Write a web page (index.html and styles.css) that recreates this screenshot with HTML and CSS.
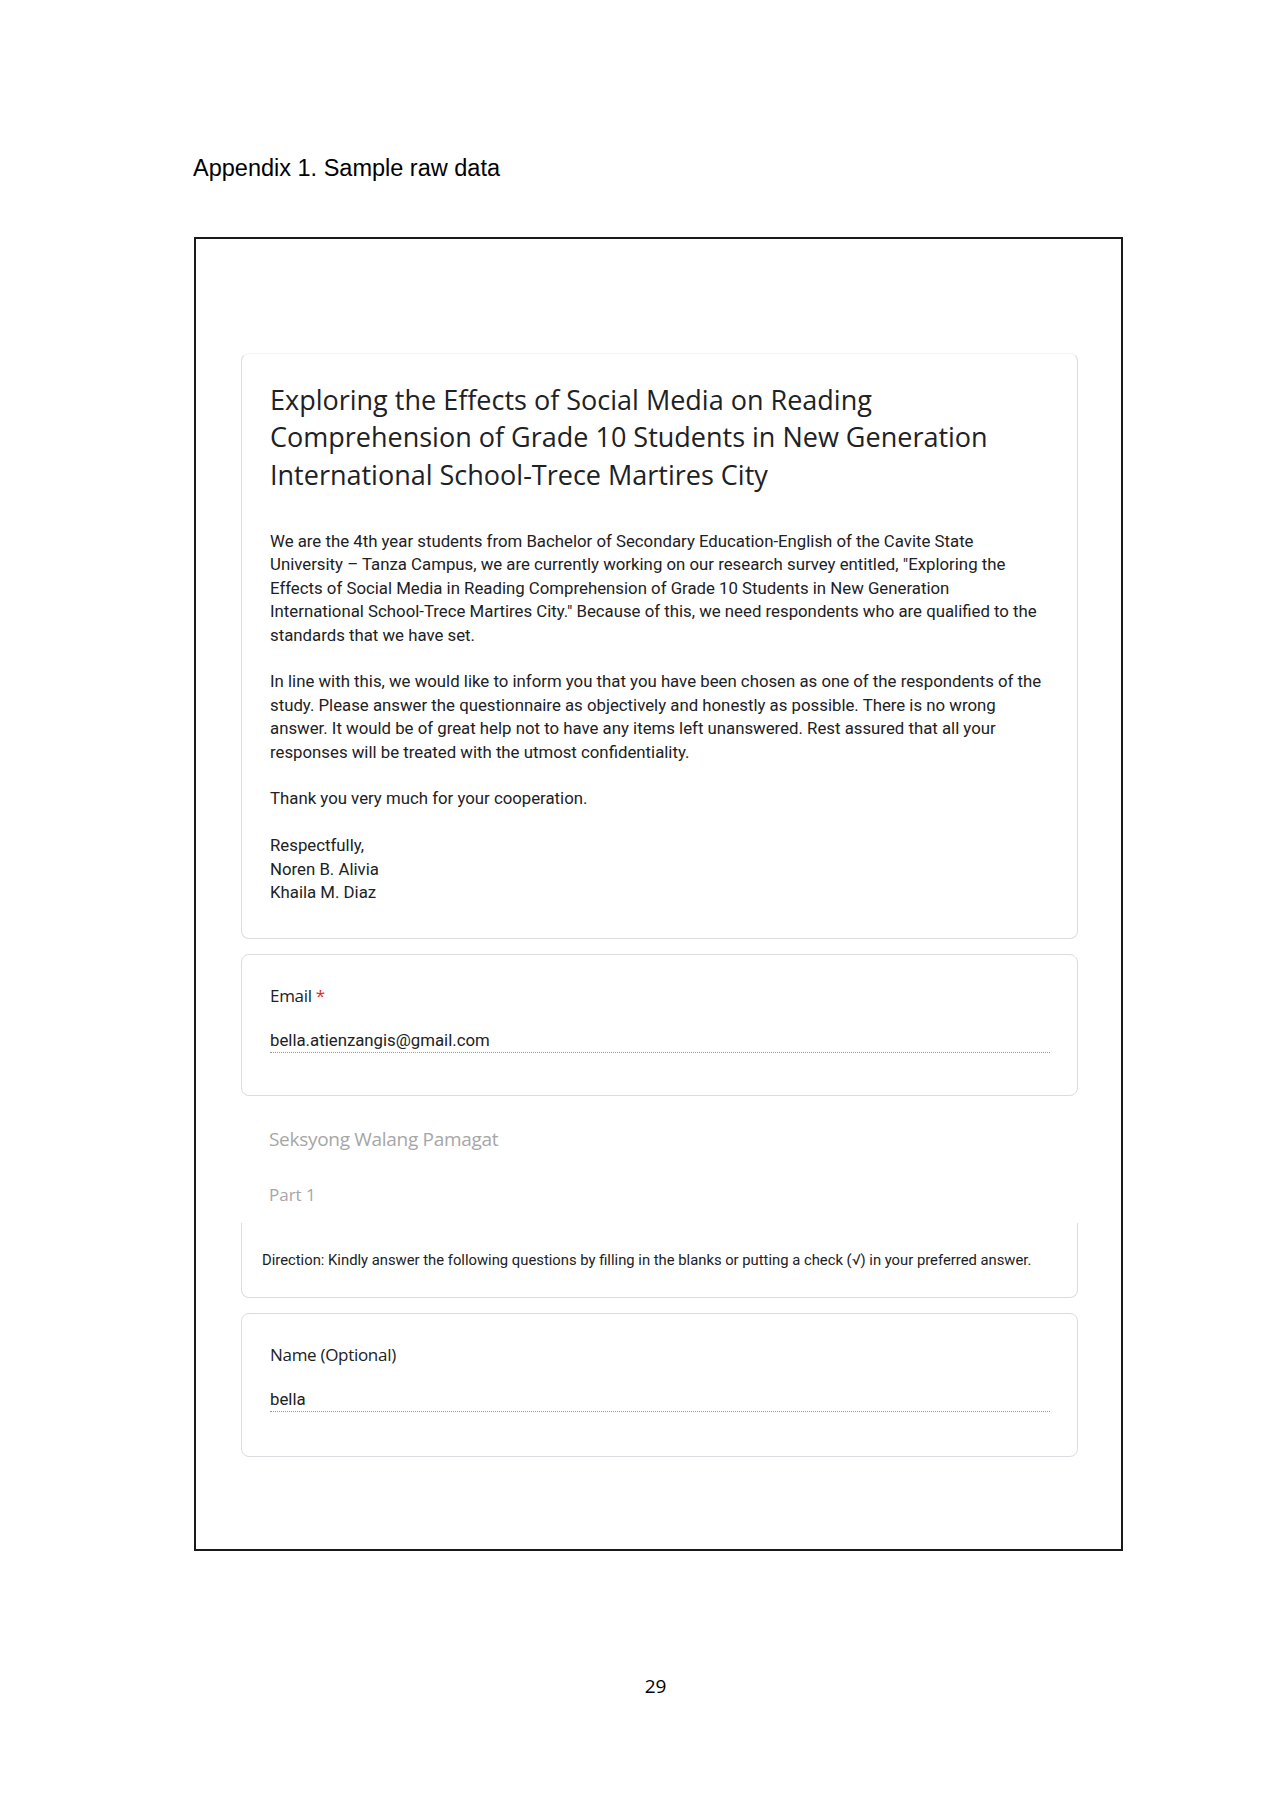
FILE: index.html
```html
<!DOCTYPE html>
<html lang="en">
<head>
<meta charset="utf-8">
<title>Appendix 1. Sample raw data</title>
<link rel="stylesheet" href="styles.css">
</head>
<body>
<div class="page">
  <h1 class="appendix">Appendix 1. Sample raw data</h1>
  <div class="frame">
    <section class="card card-header">
      <h2 class="form-title">Exploring the Effects of Social Media on Reading<br>Comprehension of Grade 10 Students in New Generation<br>International School-Trece Martires City</h2>
      <div class="form-desc">
        <p>We are the 4th year students from Bachelor of Secondary Education-English of the Cavite State<br>University – Tanza Campus, we are currently working on our research survey entitled, "Exploring the<br>Effects of Social Media in Reading Comprehension of Grade 10 Students in New Generation<br>International School-Trece Martires City." Because of this, we need respondents who are qualified to the<br>standards that we have set.</p>
        <p>In line with this, we would like to inform you that you have been chosen as one of the respondents of the<br>study. Please answer the questionnaire as objectively and honestly as possible. There is no wrong<br>answer. It would be of great help not to have any items left unanswered. Rest assured that all your<br>responses will be treated with the utmost confidentiality.</p>
        <p>Thank you very much for your cooperation.</p>
        <p>Respectfully,<br>Noren B. Alivia<br>Khaila M. Diaz</p>
      </div>
    </section>

    <section class="card question">
      <div class="q-label">Email <span class="required">*</span></div>
      <div class="q-value">bella.atienzangis@gmail.com</div>
    </section>

    <div class="section-title">Seksyong Walang Pamagat</div>
    <div class="section-sub">Part 1</div>
    <section class="card card-open">
      <p class="direction">Direction: Kindly answer the following questions by filling in the blanks or putting a check (√) in your preferred answer.</p>
    </section>

    <section class="card question question-last">
      <div class="q-label">Name (Optional)</div>
      <div class="q-value">bella</div>
    </section>
  </div>
  <div class="page-number">29</div>
</div>
</body>
</html>
```

FILE: styles.css
```css
* { box-sizing: border-box; }

body {
  margin: 0;
  background: #ffffff;
  color: #202124;
  font-family: "Liberation Sans", Arial, sans-serif;
}

.page {
  width: 1272px;
  padding-top: 154px;
}

.appendix {
  margin: 0 0 55px 193px;
  font-family: "Liberation Sans", Arial, sans-serif;
  font-weight: normal;
  font-size: 23.5px;
  line-height: 28px;
  color: #000;
}

.frame {
  margin-left: 194px;
  width: 929px;
  height: 1314px;
  border: 2px solid #1a1a1a;
  padding: 114px 0 0 45px;
}

.card {
  width: 837px;
  background: #fff;
  border: 1px solid #dadce0;
  border-radius: 8px;
}

.card-header {
  border-top-color: #f3f3f3;
  padding: 27px 29px 34px 28px;
}

.form-title {
  margin: 0 0 37px;
  font-family: "Open Sans", "Roboto", sans-serif;
  font-weight: normal;
  font-size: 27px;
  line-height: 37.3px;
  color: #202124;
}

.form-desc {
  font-family: "Roboto", sans-serif;
  font-size: 16.8px;
  line-height: 23.4px;
  color: #202124;
}

.form-desc p {
  margin: 0 0 23.4px;
}

.form-desc p:last-child {
  margin-bottom: 0;
}

.question {
  margin-top: 15px;
  padding: 29px 29px 42px 28px;
}

.question-last {
  padding-bottom: 44px;
}

.q-label {
  font-family: "Open Sans", "Roboto", sans-serif;
  font-size: 17px;
  line-height: 24px;
  letter-spacing: -0.3px;
  color: #202124;
}

.required {
  color: #d93025;
}

.q-value {
  margin-top: 20px;
  width: 780px;
  font-family: "Roboto", sans-serif;
  font-size: 16.8px;
  line-height: 24px;
  color: #202124;
  border-bottom: 1px dotted #9aa0a6;
}

.section-title {
  margin: 29px 0 0 28px;
  font-family: "Open Sans", "Roboto", sans-serif;
  font-size: 19px;
  line-height: 28px;
  letter-spacing: -0.3px;
  color: #a6a6a6;
}

.section-sub {
  margin: 28px 0 0 28px;
  font-family: "Open Sans", "Roboto", sans-serif;
  font-size: 17px;
  line-height: 28px;
  color: #a6a6a6;
}

.card-open {
  margin-top: 14px;
  border-top: none;
  border-top-left-radius: 0;
  border-top-right-radius: 0;
  padding: 27px 20px 27px 20px;
}

.direction {
  margin: 0;
  font-family: "Roboto", sans-serif;
  font-size: 14.8px;
  line-height: 20px;
  color: #202124;
}

.page-number {
  margin-top: 123px;
  text-align: center;
  width: 1311px;
  font-family: "Open Sans", sans-serif;
  font-size: 19px;
  line-height: 24px;
  color: #000;
}
```
